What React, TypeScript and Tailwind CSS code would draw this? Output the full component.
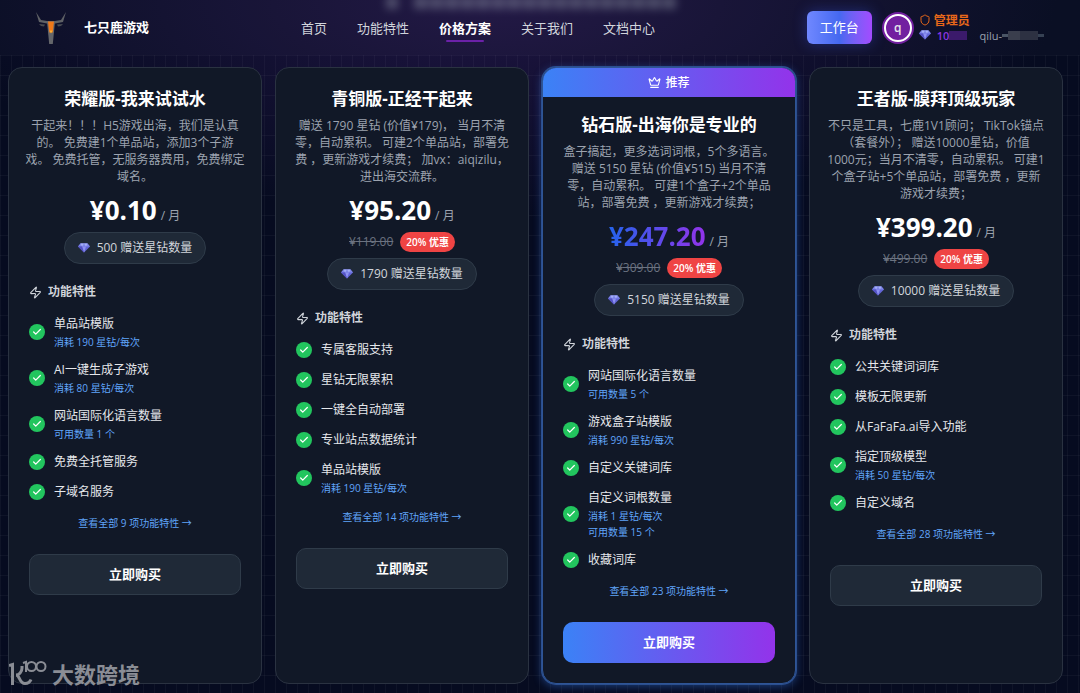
import { Check, Crown, Shield, Zap } from "lucide-react"
import clsx from "clsx"

type Feature = { name: string; notes?: string[] }

type Plan = {
  name: string
  desc: string
  price: string
  oldPrice?: string
  gems: number
  total: number
  recommended?: boolean
  features: Feature[]
}

const navItems = [
  { label: "首页", href: "#home" },
  { label: "功能特性", href: "#features" },
  { label: "价格方案", href: "#pricing", active: true },
  { label: "关于我们", href: "#about" },
  { label: "文档中心", href: "#docs" },
]

const plans: Plan[] = [
  {
    name: "荣耀版-我来试试水",
    desc: "干起来！！！H5游戏出海，我们是认真\n的。 免费建1个单品站，添加3个子游\n戏。 免费托管，无服务器费用，免费绑定\n域名。",
    price: "0.10",
    gems: 500,
    total: 9,
    features: [
      { name: "单品站模版", notes: ["消耗 190 星钻/每次"] },
      { name: "AI一键生成子游戏", notes: ["消耗 80 星钻/每次"] },
      { name: "网站国际化语言数量", notes: ["可用数量 1 个"] },
      { name: "免费全托管服务" },
      { name: "子域名服务" },
    ],
  },
  {
    name: "青铜版-正经干起来",
    desc: "赠送 1790 星钻 (价值¥179)， 当月不清\n零，自动累积。 可建2个单品站，部署免\n费 ，更新游戏才续费； 加vx：aiqizilu，\n进出海交流群。",
    price: "95.20",
    oldPrice: "119.00",
    gems: 1790,
    total: 14,
    features: [
      { name: "专属客服支持" },
      { name: "星钻无限累积" },
      { name: "一键全自动部署" },
      { name: "专业站点数据统计" },
      { name: "单品站模版", notes: ["消耗 190 星钻/每次"] },
    ],
  },
  {
    name: "钻石版-出海你是专业的",
    desc: "盒子搞起，更多选词词根，5个多语言。\n赠送 5150 星钻 (价值¥515) 当月不清\n零，自动累积。 可建1个盒子+2个单品\n站，部署免费 ，更新游戏才续费；",
    price: "247.20",
    oldPrice: "309.00",
    gems: 5150,
    total: 23,
    recommended: true,
    features: [
      { name: "网站国际化语言数量", notes: ["可用数量 5 个"] },
      { name: "游戏盒子站模版", notes: ["消耗 990 星钻/每次"] },
      { name: "自定义关键词库" },
      { name: "自定义词根数量", notes: ["消耗 1 星钻/每次", "可用数量 15 个"] },
      { name: "收藏词库" },
    ],
  },
  {
    name: "王者版-膜拜顶级玩家",
    desc: "不只是工具，七鹿1V1顾问； TikTok锚点\n（套餐外）； 赠送10000星钻，价值\n1000元；当月不清零，自动累积。 可建1\n个盒子站+5个单品站，部署免费 ，更新\n游戏才续费；",
    price: "399.20",
    oldPrice: "499.00",
    gems: 10000,
    total: 28,
    features: [
      { name: "公共关键词词库" },
      { name: "模板无限更新" },
      { name: "从FaFaFa.ai导入功能" },
      { name: "指定顶级模型", notes: ["消耗 50 星钻/每次"] },
      { name: "自定义域名" },
    ],
  },
]

function Gem() {
  return (
    <svg viewBox="0 0 24 20" className="h-[10px] w-3 shrink-0" aria-hidden="true">
      <path d="M5 1h14l5 6-12 12L0 7z" fill="#6366d8" />
      <path d="M5 1h14l5 6H0z" fill="#7f86e8" />
      <path d="M5 1l3 6 4-6 4 6 3-6z" fill="#a5b0f7" />
      <path d="M8 7h8l-4 12z" fill="#8d92f2" />
      <path d="M0 7h8l4 12z" fill="#5553c4" />
    </svg>
  )
}

function DeerLogo() {
  return (
    <svg viewBox="0 0 30 34" className="h-[34px] w-[30px]" aria-hidden="true">
      <path d="M0 1l5 8 6 1h8l6-1 5-8-3 10-8 1.500h-8L3 11z" fill="#5f6166" />
      <path d="M3 13l6 .5-1 2-3-.5zM27 13l-6 .5 1 2 3-.5z" fill="#484b52" />
      <path d="M11 10.500h8l-2.200 22.500h-3.600z" fill="#64666a" />
      <path d="M12 10.500h6l-1.300 11h-3.400z" fill="#f07818" />
      <path d="M13.400 19.500h3.200l-1.600 3z" fill="#f9b233" />
    </svg>
  )
}

function Header() {
  return (
    <header className="relative flex h-[55px] items-center justify-between overflow-hidden bg-white/[0.02] px-9">
      {/* Page copy scrolled behind the frosted bar */}
      <div aria-hidden="true" className="absolute -top-1 left-1/2 flex h-[13px] w-[290px] -translate-x-[154px] gap-4 opacity-40 blur-[4px]">
        <span className="w-3 bg-gray-400" />
        <span className="flex flex-1 gap-[2px]">
          {Array.from({ length: 17 }, (_, i) => (
            <span key={i} className="flex-1 bg-gray-400" />
          ))}
        </span>
      </div>

      <a href="#home" className="relative flex items-center gap-[18px]">
        <DeerLogo />
        <span className="text-[13px] font-bold text-white">七只鹿游戏</span>
      </a>

      <nav className="relative flex gap-[30px] text-[13px]">
        {navItems.map((item) => (
          <a
            key={item.label}
            href={item.href}
            className={clsx("relative leading-5", item.active ? "font-bold text-white" : "text-gray-300")}
          >
            {item.label}
            {item.active && <span className="absolute inset-x-[7px] -bottom-1 h-[2px] rounded-full bg-[#6b21a8]" />}
          </a>
        ))}
      </nav>

      <div className="relative flex items-center">
        <button className="h-[33px] rounded-md bg-linear-to-r from-[#7088ff] via-[#4568f0] to-[#a24bff] px-[13px] text-[13px] text-white shadow-[0_0_14px_rgba(59,91,246,0.35)]">
          工作台
        </button>
        <span className="ml-3 flex size-[28px] items-center justify-center rounded-full border-2 border-white bg-[#7220a0] text-[12px] font-semibold text-gray-200 ring-2 ring-[#7220a0]">
          q
        </span>
        <div className="ml-[7px] text-[11px] leading-[15px]">
          <div className="flex items-center gap-[3px] text-[12px] font-bold text-[#e8681a]">
            <Shield className="size-3" />
            管理员
          </div>
          <div className="flex items-center">
            <Gem />
            <span className="ml-1.5 font-semibold text-[#8b35e0]">10</span>
            <span className="h-[9px] w-[18px] bg-[#3b1a6b]" />
            <span className="ml-3 text-gray-400">qilu-</span>
            <span className="h-[3px] w-[6px] bg-gray-600" />
            <span className="h-[9px] w-3 bg-[#3a3e4d]" />
            <span className="h-[9px] w-[18px] bg-[#2d3142]" />
            <span className="h-[3px] w-[6px] bg-gray-700" />
          </div>
        </div>
      </div>
    </header>
  )
}

function PlanCard({ plan }: { plan: Plan }) {
  return (
    <article
      className={clsx(
        "overflow-hidden rounded-[14px] border bg-[#111827]",
        plan.recommended
          ? "border-[#2f5596] shadow-[0_0_0_1px_#2b4f8f,0_2px_10px_rgba(59,130,246,0.45)]"
          : "border-[#2a3241]",
      )}
    >
      {plan.recommended && (
        <div className="flex h-[29px] items-center justify-center gap-1 bg-linear-to-r/srgb from-[#3b82f6] to-[#9333ea] text-[12px] font-medium text-white">
          <Crown className="size-[13px]" />
          推荐
        </div>
      )}

      <div className={clsx("px-5 pb-5", plan.recommended ? "pt-[17px]" : "pt-5")}>
        <div className="flex flex-col items-center">
          <h2 className="text-[17px] leading-[22px] font-bold whitespace-nowrap text-white">{plan.name}</h2>
          <p className="-mx-2 mt-[7px] text-center text-[12px] leading-[17px] whitespace-pre text-[#9ca3af]">{plan.desc}</p>

          <div className="mt-[9px] flex h-8 items-baseline gap-1">
            <span
              className={clsx(
                "text-[26px] leading-8 font-bold",
                plan.recommended
                  ? "bg-linear-to-r/srgb from-[#2563eb] to-[#9333ea] bg-clip-text text-transparent"
                  : "text-white",
              )}
            >
              ¥{plan.price}
            </span>
            <span className="text-[12px] text-[#9ca3af]">/ 月</span>
          </div>

          {plan.oldPrice && (
            <div className="mt-[6px] flex h-5 items-center gap-[7px]">
              <del className="text-[12px] text-[#6b7280]">¥{plan.oldPrice}</del>
              <span className="rounded-full bg-[#ef4444] px-[6px] text-[10px] leading-5 font-semibold text-white">
                20% 优惠
              </span>
            </div>
          )}

          <div className="mt-[6px] flex h-8 items-center gap-[7px] rounded-full border border-[#2f3b49] bg-[#1f2937] px-[13px] text-[12px] text-[#d1d5db]">
            <Gem />
            <span>{plan.gems} 赠送星钻数量</span>
          </div>
        </div>

        <h3 className="mt-[18px] flex h-5 items-center gap-[6px] text-[12px] font-bold text-[#d1d5db]">
          <Zap className="size-[13px]" />
          功能特性
        </h3>

        <ul className="mt-3 space-y-[10px]">
          {plan.features.map((feature) => (
            <li key={feature.name} className="flex items-center gap-[9px]">
              <span className="flex size-4 shrink-0 items-center justify-center rounded-full bg-[#22c55e]">
                <Check className="size-[10px] text-white" strokeWidth={3} />
              </span>
              <div>
                <div className="text-[12px] leading-5 text-gray-200">{feature.name}</div>
                {feature.notes?.map((note) => (
                  <div key={note} className="text-[10px] leading-4 text-[#60a5fa]">
                    {note}
                  </div>
                ))}
              </div>
            </li>
          ))}
        </ul>

        <button className="mt-[13px] block w-full text-center text-[10px] leading-4 text-[#60a5fa]">
          查看全部 {plan.total} 项功能特性 →
        </button>

        <button
          className={clsx(
            "mt-[23px] block h-[41px] w-full rounded-[10px] text-[13px] font-bold text-white",
            plan.recommended
              ? "bg-linear-to-r/srgb from-[#3b82f6] to-[#9333ea]"
              : "border border-[#2f3b49] bg-[#1f2937]",
          )}
        >
          立即购买
        </button>
      </div>
    </article>
  )
}

function Watermark() {
  return (
    <div className="absolute bottom-[7px] left-[9px] flex items-end gap-[5px] text-[#8a8d95]">
      <svg viewBox="0 0 38 26" className="h-[26px] w-[38px]" fill="none" stroke="currentColor" aria-hidden="true">
        <path d="M0 5.500l3.500-1V25" strokeWidth="3" />
        <path d="M13 6v2c0 4-3 7-6 7 4 0 3 8.500 9 8.500 3 0 5-1.500 6-4" strokeWidth="3" />
        <path d="M14 3l3-1v10" strokeWidth="2" />
        <circle cx="22.500" cy="6.500" r="4.500" strokeWidth="2" />
        <circle cx="32" cy="6.500" r="4.500" strokeWidth="2" />
      </svg>
      <span className="text-[22px] leading-6 font-bold">大数跨境</span>
    </div>
  )
}

export default function App() {
  return (
    <div className="relative flex min-h-screen flex-col overflow-hidden bg-[#060b20] bg-[radial-gradient(ellipse_560px_220px_at_46%_0,#1f1543,transparent)] font-['Open_Sans','Noto_Sans_CJK_SC',sans-serif]">
      <Header />
      <main className="flex-1 bg-[linear-gradient(to_right,rgba(255,255,255,0.035)_1px,transparent_1px),linear-gradient(to_bottom,rgba(255,255,255,0.035)_1px,transparent_1px)] bg-size-[11px_20px] pt-3 pr-[17px] pb-[9px] pl-2">
        <div className="grid grid-cols-4 gap-[13px]">
          {plans.map((plan) => (
            <PlanCard key={plan.name} plan={plan} />
          ))}
        </div>
      </main>
      <Watermark />
    </div>
  )
}
